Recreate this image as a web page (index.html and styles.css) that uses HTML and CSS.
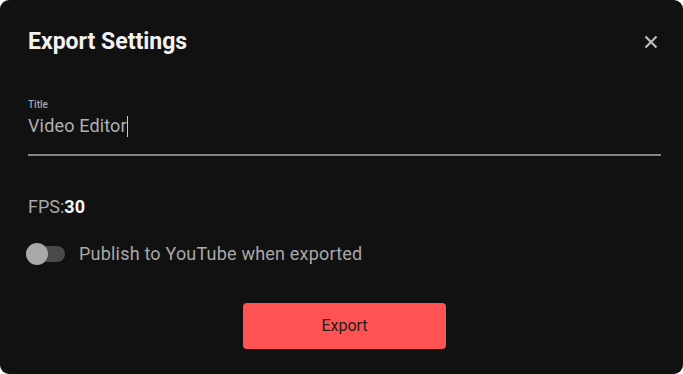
FILE: index.html
```html
<!DOCTYPE html>
<html lang="en">
<head>
    <meta charset="UTF-8">
    <meta name="viewport" content="width=device-width, initial-scale=1.0">
    <title>Export Settings</title>
    <link rel="stylesheet" href="styles.css">
</head>
<body>
<div class="dialog">
    <!-- header -->
    <div class="dialog-head">
        <h2 class="dialog-title">Export Settings</h2>
        <span class="close-button">
            <svg width="14" height="14" viewBox="0 0 14 14">
                <path d="M1.5 1.5 L12.5 12.5 M12.5 1.5 L1.5 12.5" stroke="#bdbdbd" stroke-width="2.2" stroke-linecap="butt"/>
            </svg>
        </span>
    </div>
    <!-- title field -->
    <div class="field">
        <label class="field-label">Title</label>
        <div class="field-input">Video Editor<span class="caret"></span></div>
    </div>
    <!-- fps -->
    <p class="fps">FPS:<b>30</b></p>
    <!-- youtube toggle -->
    <div class="toggle-row">
        <span class="toggle"><span class="toggle-thumb"></span></span>
        <span class="toggle-text">Publish to YouTube when exported</span>
    </div>
    <div class="center">
        <a href="#" class="export-button">Export</a>
    </div>
</div>
</body>
</html>
```

FILE: styles.css
```css
body {
    margin: 0;
    background-color: #fff;
    font-family: Roboto, "Liberation Sans", sans-serif;
}
.dialog {
    width: 683px;
    height: 374px;
    box-sizing: border-box;
    background-color: #111;
    border-radius: 9px;
    padding: 0 22px 0 28px;
}
.dialog-head {
    display: flex;
    justify-content: space-between;
    align-items: center;
    padding-top: 29px;
}
.dialog-title {
    margin: 0;
    color: #f2f2f2;
    font-size: 23px;
    line-height: 26px;
    font-weight: 700;
}
.close-button {
    display: flex;
    margin-right: 3px;
}
.field {
    margin-top: 44px;
    width: 633px;
    border-bottom: 2px solid #858585;
    padding-bottom: 17px;
}
.field-label {
    display: block;
    color: #a8a8a8;
    font-size: 10px;
    line-height: 12px;
    font-weight: 500;
}
.field-input {
    margin-top: 4px;
    color: #b0b0b0;
    font-size: 18px;
    line-height: 22px;
    letter-spacing: 0.15px;
    display: flex;
    align-items: center;
}
.caret {
    display: inline-block;
    width: 1.5px;
    height: 21px;
    background-color: #c8c8c8;
}
.fps {
    margin: 40px 0 0;
    color: #a8a8a8;
    font-size: 18px;
    line-height: 22px;
}
.fps b {
    color: #f5f5f5;
}
.toggle-row {
    display: flex;
    align-items: center;
    margin-top: 25px;
    margin-left: -2px;
}
.toggle {
    position: relative;
    display: inline-block;
    width: 39px;
    height: 16px;
    border-radius: 8px;
    background-color: #4a4a4a;
    margin-right: 14px;
}
.toggle-thumb {
    position: absolute;
    left: 0;
    top: -3px;
    width: 22px;
    height: 22px;
    border-radius: 50%;
    background-color: #a9a9a9;
}
.toggle-text {
    color: #a8a8a8;
    font-size: 18px;
    line-height: 22px;
    letter-spacing: 0.2px;
}
.center {
    text-align: center;
    margin-top: 38px;
}
.export-button {
    display: inline-block;
    width: 203px;
    height: 46px;
    line-height: 46px;
    background-color: #ff5252;
    color: #1f1f1f;
    text-decoration: none;
    font-size: 16px;
    border-radius: 4px;
}
```
